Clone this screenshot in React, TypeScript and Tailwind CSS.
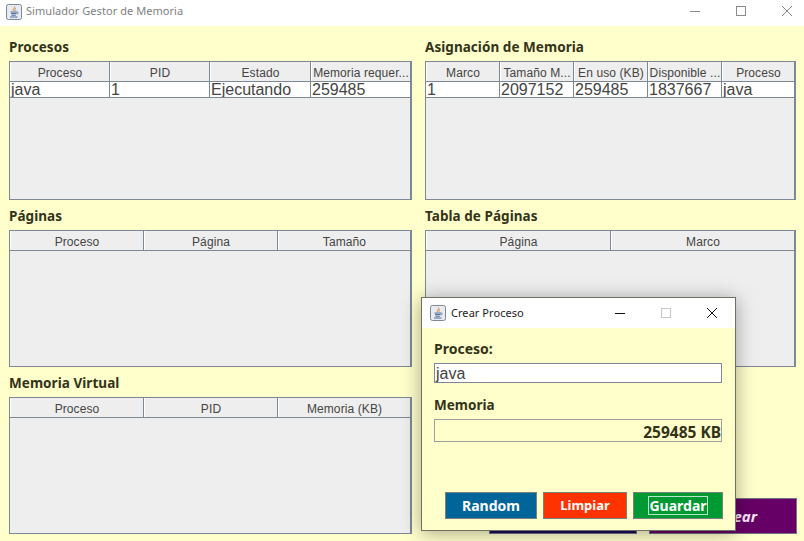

const sans = "font-['Liberation_Sans',Arial,sans-serif]";
const ui = "font-['Noto_Sans','Open_Sans',sans-serif]";
const head = "font-['Noto_Sans','DejaVu_Sans',sans-serif]";

function JavaIcon() {
  return (
    <svg width="16" height="16" viewBox="0 0 16 16" className="shrink-0">
      <rect x="0.5" y="0.5" width="15" height="15" rx="2" fill="#e8ebf2" stroke="#7f8797" />
      <path d="M8.6 2.5c1 1.6-2.4 2.4-1.2 4.3M10 4.2c-1.2.8-1.5 1.5-.8 2.6" fill="none" stroke="#d8812a" strokeWidth="1" />
      <path d="M4.5 8h6.5M5 9.6h5.5M5.4 11.2h4.4M4 13h7.5" fill="none" stroke="#4a6b9c" strokeWidth="1" />
      <path d="M11 8.2c1.6-.4 1.8 1.4-.3 1.8" fill="none" stroke="#4a6b9c" strokeWidth="0.8" />
    </svg>
  );
}

function Table({ cols, headers, row, h }: { cols: string; headers: string[]; row?: string[]; h: string }) {
  return (
    <div className={`${h} border border-[#7c8894] border-r-2 bg-[#eeeeee] ${sans}`}>
      <div className={`grid ${cols} h-[20px] border-b border-[#7c8894]`}>
        {headers.map((t, i) => (
          <div
            key={i}
            className={`flex items-center justify-center pt-[2px] overflow-hidden whitespace-nowrap text-[12px] tracking-[0.1px] text-[#444] border-l border-white ${i < headers.length - 1 ? "border-r border-r-[#7c8894]" : ""}`}
          >
            {t}
          </div>
        ))}
      </div>
      {row && (
        <div className={`grid ${cols} h-[16px] bg-white border-b border-[#7c8894]`}>
          {row.map((t, i) => (
            <div
              key={i}
              className={`pl-[1px] overflow-hidden whitespace-nowrap text-[16px] leading-[15px] text-[#444] ${i < row.length - 1 ? "border-r border-[#7c8894]" : ""}`}
            >
              {t}
            </div>
          ))}
        </div>
      )}
    </div>
  );
}

function Section({ title, children }: { title: string; children: React.ReactNode }) {
  return (
    <section>
      <h2 className={`h-[24px] pt-[1px] text-[13.5px] leading-[18px] tracking-[0.05px] font-bold text-[#333319] ${head}`}>{title}</h2>
      {children}
    </section>
  );
}

function DialogButton({ label, color, w, size, focus }: { label: string; color: string; w: string; size: string; focus?: boolean }) {
  return (
    <div className={`${w} ${color} ${size} h-[27px] flex items-center justify-center border border-[#77827c] text-white font-bold ${head}`}>
      <span className={focus ? "h-[19px] leading-[17px] border border-[#b9e6c8]" : ""}>{label}</span>
    </div>
  );
}

export default function App() {
  return (
    <div className="relative w-[804px] h-[541px] overflow-hidden flex flex-col bg-[#ffffcc]">
      <header className="h-[26px] bg-white flex items-center pl-[6px] pb-[3px] shrink-0">
        <JavaIcon />
        <span className={`ml-[4px] text-[11px] tracking-[0.05px] text-[#808080] ${ui}`}>Simulador Gestor de Memoria</span>
        <div className="ml-auto flex items-center text-[#8a8a8a] mb-[2px]">
          <svg width="12" height="12" viewBox="0 0 12 12" className="mr-[34px]"><path d="M1 6.5h10" stroke="#8a8a8a" /></svg>
          <svg width="12" height="12" viewBox="0 0 12 12" className="mr-[34px]"><rect x="1.5" y="1.5" width="9" height="9" fill="none" stroke="#8a8a8a" /></svg>
          <svg width="12" height="12" viewBox="0 0 12 12" className="mr-[11px]"><path d="M1 1l10 10M11 1L1 11" stroke="#8a8a8a" /></svg>
        </div>
      </header>

      <main className="pt-[11px] pl-[9px] grid grid-cols-[403px_371px] gap-x-[13px] gap-y-[6px] grid-rows-[163px_161px_161px]">
        <Section title="Procesos">
          <Table
            h="h-[139px]"
            cols="grid-cols-[100px_100px_101px_1fr]"
            headers={["Proceso", "PID", "Estado", "Memoria requer..."]}
            row={["java", "1", "Ejecutando", "259485"]}
          />
        </Section>
        <Section title="Asignación de Memoria">
          <Table
            h="h-[139px]"
            cols="grid-cols-[74px_74px_74px_74px_1fr]"
            headers={["Marco", "Tamaño M...", "En uso (KB)", "Disponible ...", "Proceso"]}
            row={["1", "2097152", "259485", "1837667", "java"]}
          />
        </Section>
        <Section title="Páginas">
          <Table h="h-[137px]" cols="grid-cols-[134px_134px_1fr]" headers={["Proceso", "Página", "Tamaño"]} />
        </Section>
        <Section title="Tabla de Páginas">
          <Table h="h-[137px]" cols="grid-cols-[185px_1fr]" headers={["Página", "Marco"]} />
        </Section>
        <Section title="Memoria Virtual">
          <Table h="h-[137px]" cols="grid-cols-[134px_134px_1fr]" headers={["Proceso", "PID", "Memoria (KB)"]} />
        </Section>
        <div className="flex items-end justify-end gap-[12px] -mr-[1px] h-[161px]">
          <div className="w-[148px] h-[36px] bg-[#1b0a5c] border border-[#77727f]" />
          <div className={`w-[148px] h-[36px] bg-[#660066] border border-[#77727f] flex items-center justify-end pr-[39px] text-[#ffe6ff] text-[15px] font-bold italic ${head}`}>Crear</div>
        </div>
      </main>

      <div className="absolute left-[421px] top-[297px] w-[315px] h-[234px] flex flex-col bg-[#ffffcc] border border-[#6f6f63] shadow-[0_2px_18px_rgba(0,0,0,0.35)]">
        <div className="h-[30px] bg-white flex items-center pl-[8px] shrink-0">
          <JavaIcon />
          <span className={`ml-[5px] text-[11px] tracking-[0.05px] text-[#222] ${ui}`}>Crear Proceso</span>
          <div className="ml-auto flex items-center">
            <svg width="12" height="12" viewBox="0 0 12 12" className="mr-[34px]"><path d="M1 6.5h10" stroke="#111" /></svg>
            <svg width="12" height="12" viewBox="0 0 12 12" className="mr-[34px]"><rect x="1.5" y="1.5" width="9" height="9" fill="none" stroke="#c8c8c8" /></svg>
            <svg width="12" height="12" viewBox="0 0 12 12" className="mr-[17px]"><path d="M1 1l10 10M11 1L1 11" stroke="#111" /></svg>
          </div>
        </div>
        <div className="flex flex-col pl-[12px] pr-[13px] flex-1">
          <label className={`mt-[11px] h-[24px] text-[14px] leading-[19px] font-bold text-[#333319] ${head}`}>Proceso:</label>
          <div className={`h-[20px] bg-white border border-[#7c8894] pl-[1px] text-[16px] leading-[20px] text-[#444] ${sans}`}>java</div>
          <label className={`mt-[12px] h-[24px] pt-[1px] text-[13.5px] leading-[19px] font-bold text-[#333319] ${head}`}>Memoria</label>
          <div className={`h-[23px] border border-[#9a9f9f] text-right text-[15.5px] leading-[24px] font-bold text-[#333319] ${head}`}>259485 KB</div>
          <div className="mt-auto mb-[11px] ml-[11px] -mr-[1px] flex gap-[6px]">
            <DialogButton label="Random" color="bg-[#006699]" size="text-[14px]" w="w-[92px]" />
            <DialogButton label="Limpiar" color="bg-[#ff3300]" size="text-[13px]" w="w-[84px]" />
            <DialogButton label="Guardar" color="bg-[#009933]" size="text-[14px]" w="w-[90px]" focus />
          </div>
        </div>
      </div>
    </div>
  );
}
